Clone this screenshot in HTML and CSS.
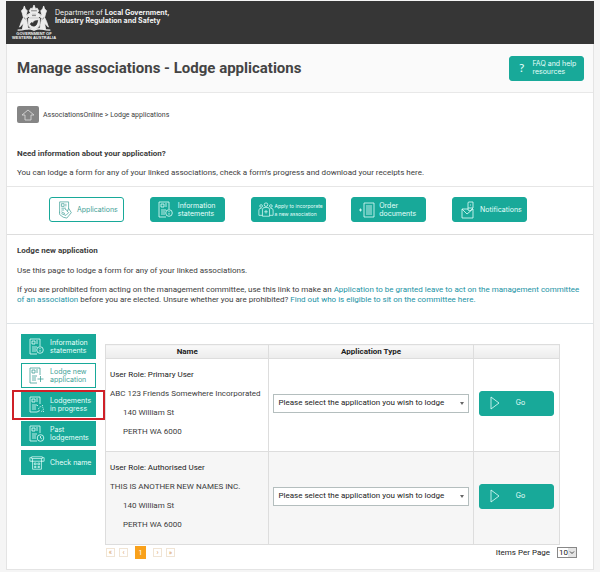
FILE: index.html
```html
<!DOCTYPE html>
<html lang="en">
<head>
<meta charset="utf-8">
<meta name="viewport" content="width=device-width, initial-scale=1">
<title>Manage associations - Lodge applications</title>
<link rel="stylesheet" href="styles.css">
</head>
<body>
<svg class="sprite" aria-hidden="true">
  <symbol id="i-doc" viewBox="0 0 16 18">
    <path d="M11 8V1H1v15h7M3 3h3v3H3zM8 2v4M3 9h5M3 11h4M3 13h4"/>
  </symbol>
  <symbol id="i-info" viewBox="0 0 16 18">
    <use href="#i-doc"/><circle cx="11" cy="12" r="3.3"/><path d="M11 10v1M11 11.8v2"/>
  </symbol>
  <symbol id="i-clock" viewBox="0 0 16 18">
    <use href="#i-doc"/><circle cx="11.500" cy="13" r="3.300"/><path d="M11.500 11v2l1.400.9"/>
  </symbol>
  <symbol id="i-plus" viewBox="0 0 16 18">
    <use href="#i-doc"/><path d="M11.500 9v6M8.500 12h6"/>
  </symbol>
  <symbol id="i-gear" viewBox="0 0 16 18">
    <use href="#i-doc"/><circle cx="12" cy="13" r="2.4" stroke-dasharray="1.2 1"/><path d="M8 9l1 1M14 9l-1 1M8 16l2-1M15 16l-1-1"/>
  </symbol>
  <symbol id="i-hand" viewBox="0 0 16 20">
    <path d="M12 8V1H2v12M4 3h3v3H4zM9 3v3M4 8h5M4 10h3M2 12v3l4 3 4 1 5-6-3-5-1 3-3-2M4 12l4 2M4 14l5 2M10 11l2 2-3 3"/>
  </symbol>
  <symbol id="i-people" viewBox="0 0 18 18">
    <circle cx="9" cy="3" r="2"/><circle cx="3.5" cy="4.500" r="1.500"/><circle cx="14.500" cy="4.500" r="1.500"/>
    <path d="M5 16V8q0-2 4-2t4 2v8zM5 15H1V9q0-2 3-2M13 15h4V9q0-2-3-2M9 9v4M7 11h4"/>
  </symbol>
  <symbol id="i-order" viewBox="0 0 16 18">
    <path d="M5 2h10v14H5zM7 5h6M7 7h6M7 9h6M7 11h6M7 13h6M0 9h3M1.500 7.500v3"/>
  </symbol>
  <symbol id="i-mail" viewBox="0 0 14 18">
    <path d="M7 8H1v9h11V8M1 8l5 5 6-5M7 9V2q0-1 1-1h4v6l-3 3zM9 4h1M7 7h5"/>
  </symbol>
  <symbol id="i-shop" viewBox="0 0 18 18">
    <path d="M3 2h12v2H3zM3 3H1v4h3M15 3h2v4h-3M4 4v12h10V4M3 7h12M6 9h2v2H6zM10 9h2v2h-2zM6 13h2v1H6zM10 13h2v1h-2z"/>
  </symbol>
  <symbol id="i-play" viewBox="0 0 10 14"><path d="M1 1v12l8-6z"/></symbol>
  <symbol id="i-caret" viewBox="0 0 4 3"><path d="M0 0h4L2 3z" fill="#666" stroke="none"/></symbol>
</svg>

<div class="page">
  <header class="banner">
    <div class="crest">
      <svg class="crest-art" viewBox="0 0 36 28" aria-hidden="true">
        <g fill="#ececec">
          <path d="M13 6l2-3 1 2 2-5 2 5 1-2 2 3-2 3h-6z"/>
          <path d="M11 10l4-2 1 2h4l1-2 4 2-2 3H13z"/>
          <path d="M12 14h12v5q0 5-6 7-6-2-6-7z"/>
          <path d="M8 1l1 3 2 2-1 4 2 2-2 2 1 5 1 6H6l1-6-4 4 2-6 2-4-1-4-1-3 2-2zM28 1l-1 3-2 2 1 4-2 2 2 2-1 5-1 6h6l-1-6 4 4-2-6-2-4 1-4 1-3-2-2z"/>
        </g>
        <path d="M1 26q5 0 8-1 4-1 9 1 5-2 9-1 3 1 8 1" stroke="#ececec" stroke-width="1.400"/>
        <path d="M14 20q1-3 3-1 0-3 5-3-1 6-4 6-3 0-4-2zM16 11h4M15 6h6M8 13l1 2M28 13l-1 2" fill="#363636" stroke="#363636" stroke-width=".6"/>
      </svg>
      <span>GOVERNMENT OF</span><span>WESTERN AUSTRALIA</span>
    </div>
    <p class="dept">Department of <b>Local Government,<br>Industry Regulation and Safety</b></p>
  </header>

  <div class="title-bar">
    <h1>Manage associations - Lodge applications</h1>
    <button class="btn help" type="button"><span class="q">?</span><span>FAQ and help<br>resources</span></button>
  </div>

  <main>
    <nav class="crumbs" aria-label="Breadcrumb">
      <a class="home" href="#" aria-label="Home"><svg viewBox="0 0 14 12"><path d="M1 6l6-5 6 5h-3v5H4V6z"/></svg></a>
      <span>AssociationsOnline &gt; Lodge applications</span>
    </nav>

    <section class="info">
      <h2>Need information about your application?</h2>
      <p>You can lodge a form for any of your linked associations, check a form's progress and download your receipts here.</p>
    </section>

    <nav class="actions" aria-label="Association services">
      <button class="btn light" type="button"><svg><use href="#i-hand"/></svg><span>Applications</span></button>
      <button class="btn" type="button"><svg><use href="#i-info"/></svg><span>Information<br>statements</span></button>
      <button class="btn tight" type="button"><svg><use href="#i-people"/></svg><span>Apply to incorporate<br>a new association</span></button>
      <button class="btn" type="button"><svg><use href="#i-order"/></svg><span>Order<br>documents</span></button>
      <button class="btn" type="button"><svg><use href="#i-mail"/></svg><span>Notifications</span></button>
    </nav>

    <section class="intro">
      <h2>Lodge new application</h2>
      <p>Use this page to lodge a form for any of your linked associations.</p>
      <p>If you are prohibited from acting on the management committee, use this link to make an <a href="#">Application to be granted leave to act on the management committee of an association</a> before you are elected. Unsure whether you are prohibited? <a href="#">Find out who is eligible to sit on the committee here.</a></p>
    </section>

    <section class="work">
      <nav class="side" aria-label="Lodgement menu">
        <button class="btn" type="button"><svg><use href="#i-info"/></svg><span>Information<br>statements</span></button>
        <button class="btn light" type="button"><svg><use href="#i-plus"/></svg><span>Lodge new<br>application</span></button>
        <button class="btn marked" type="button"><svg><use href="#i-gear"/></svg><span>Lodgements<br>in progress</span></button>
        <button class="btn" type="button"><svg><use href="#i-clock"/></svg><span>Past<br>lodgements</span></button>
        <button class="btn" type="button"><svg><use href="#i-shop"/></svg><span>Check name</span></button>
      </nav>

      <div class="results">
        <table>
          <colgroup><col class="c-name"><col class="c-type"><col class="c-go"></colgroup>
          <thead><tr><th>Name</th><th>Application Type</th><th></th></tr></thead>
          <tbody>
            <tr>
              <td><p>User Role: Primary User</p><p class="org">ABC 123 Friends Somewhere Incorporated</p><p class="addr">140 William St</p><p class="addr">PERTH WA 6000</p></td>
              <td><div class="pick"><select aria-label="Application type for ABC 123 Friends Somewhere Incorporated"><option>Please select the application you wish to lodge</option></select><svg><use href="#i-caret"/></svg></div></td>
              <td><button class="btn go" type="button"><svg><use href="#i-play"/></svg><span>Go</span></button></td>
            </tr>
            <tr>
              <td><p>User Role: Authorised User</p><p class="org">THIS IS ANOTHER NEW NAMES INC.</p><p class="addr">140 William St</p><p class="addr">PERTH WA 6000</p></td>
              <td><div class="pick"><select aria-label="Application type for This is another new names Inc."><option>Please select the application you wish to lodge</option></select><svg><use href="#i-caret"/></svg></div></td>
              <td><button class="btn go" type="button"><svg><use href="#i-play"/></svg><span>Go</span></button></td>
            </tr>
          </tbody>
        </table>
        <div class="pager">
          <button type="button" aria-label="First page">«</button>
          <button type="button" aria-label="Previous page">‹</button>
          <button class="current" type="button">1</button>
          <button type="button" aria-label="Next page">›</button>
          <button type="button" aria-label="Last page">»</button>
          <label for="per-page">Items Per Page</label>
          <span class="per-page"><select id="per-page"><option>10</option></select><svg viewBox="0 0 8 8"><path d="M2 3l2 2 2-2"/></svg></span>
        </div>
      </div>
    </section>
  </main>
</div>
</body>
</html>
```

FILE: styles.css
```css
* { box-sizing: border-box; }
body {
  margin: 0;
  padding: 1px 6px 0;
  background: #f5f5f5;
  color: #3c3c3c;
  font: 8px/10px Roboto, sans-serif;
}
h1, h2, p { margin: 0; }
a { color: #2193a5; text-decoration: none; }
svg { fill: none; stroke: currentColor; stroke-width: .8; }
button, select { font: inherit; color: inherit; }
.sprite { position: absolute; width: 0; height: 0; }

.page { border: 1px solid #e4e4e4; border-top: 0; background: #fff; }

.banner {
  display: flex;
  gap: 1px;
  height: 43px;
  margin: 0 -1px;
  padding: 4px 8px;
  background: #363636;
  color: #f2f2f2;
}
.crest {
  display: flex;
  flex-direction: column;
  align-items: center;
  width: 40px;
  font: bold 4px/4px "Liberation Sans", sans-serif;
  white-space: nowrap;
}
.crest-art { width: 36px; height: 28px; }
.dept { padding-top: 4px; font: 7px/8px Inter, sans-serif; }

.title-bar {
  display: flex;
  align-items: center;
  justify-content: space-between;
  height: 49px;
  padding: 0 9px 0 10px;
  border-bottom: 1px solid #e8e8e8;
  background: #fafafa;
}
h1 { font-size: 15px; line-height: 20px; color: #444; }
h2 { font-size: 8px; line-height: 10px; }

.btn {
  display: flex;
  align-items: center;
  gap: 4px;
  width: 75px;
  height: 25px;
  padding: 0 0 0 7px;
  border: 1px solid #18a999;
  border-radius: 3px;
  background: #18a999;
  color: #e6fffb;
  font: 7px/8px Inter, sans-serif;
  text-align: left;
  white-space: nowrap;
}
.btn svg { flex: none; width: 16px; height: 18px; }
.btn.light { background: #fff; color: #3f9f97; }
.btn.tight { gap: 1px; padding-left: 6px; font-size: 5px; }
.btn.help { gap: 8px; padding-left: 9px; }
.q { font: 12px/14px Lato, sans-serif; }

.crumbs {
  display: flex;
  align-items: center;
  gap: 4px;
  padding: 13px 10px 0;
  font-size: 7px;
}
.home {
  display: grid;
  place-items: center;
  width: 22px;
  height: 17px;
  border-radius: 2px;
  background: #858585;
  color: #ddd;
}
.home svg { width: 14px; height: 12px; }

.info { padding: 26px 10px 8px; border-bottom: 1px solid #e6e6e6; }
.info h2 + p { margin-top: 9px; }

.actions {
  display: grid;
  grid-template-columns: repeat(5, 75px);
  justify-content: space-between;
  padding: 10px 66px 12px 42px;
  border-bottom: 1px solid #ddd;
}

.intro { padding: 11px 6px 18px 10px; border-bottom: 1px solid #dde3e6; }
.intro h2 + p { margin-top: 10px; }
.intro p + p { margin-top: 9px; }

.work {
  display: flex;
  gap: 9px;
  padding: 10px 16px 10px 14px;
}
.side { display: flex; flex-direction: column; gap: 4px; }
.side .btn { gap: 5px; border-radius: 0; }
.marked { position: relative; }
.marked::after {
  content: "";
  position: absolute;
  inset: -3px -10px -4px;
  z-index: 1;
  border: 2px solid #cf2028;
}

.results { flex: 1; padding-top: 10px; }
table {
  width: calc(100% - 17px);
  border-collapse: collapse;
  table-layout: fixed;
}
.c-name { width: 36%; }
.c-type { width: 45%; }
.c-go { width: 19%; }
th, td { border: 1px solid #ddd; }
th {
  height: 14px;
  padding: 0;
  background: linear-gradient(#f9f9f9, #ececec);
  color: #222;
  line-height: 12px;
}
td { height: 93px; padding: 0 4px 4px; }
tbody tr:nth-child(2) { background: #f6f6f6; }
td p + p { margin-top: 9px; }
.addr { padding-left: 13px; }
td p:first-child { color: #222; }

.pick { position: relative; }
.pick select {
  display: block;
  width: 100%;
  height: 19px;
  padding: 0 4px;
  border: 1px solid #b4bebe;
  border-radius: 0;
  background: #fff;
  color: #222;
  appearance: none;
}
.pick svg { position: absolute; top: 8px; right: 5px; width: 4px; height: 3px; }
.go { gap: 16px; margin: 0 auto; padding-left: 10px; }
.btn.go svg { width: 10px; height: 14px; }

.pager { display: flex; align-items: center; gap: 4px; padding: 1px 0 0 1px; }
.pager button {
  width: 9px;
  height: 9px;
  padding: 0;
  border: 1px solid #f0e4d4;
  background: #fff;
  color: #d9a066;
  font-size: 7px;
  line-height: 6px;
}
.pager .current {
  width: 11px;
  height: 13px;
  margin: 0 3px;
  border-color: #f9a11b;
  background: #f9a11b;
  color: #fff;
  line-height: 10px;
}
.pager label { margin-left: auto; color: #222; }
.per-page { position: relative; margin-left: 3px; }
.per-page select {
  display: block;
  width: 20px;
  height: 11px;
  padding: 0 1px;
  border: 1px solid #888;
  border-radius: 0;
  background: #fff;
  color: #222;
  appearance: none;
}
.per-page svg {
  position: absolute;
  top: 1px;
  right: 1px;
  width: 8px;
  height: 9px;
  background: #e4e4e4;
  color: #222;
  pointer-events: none;
}
```
